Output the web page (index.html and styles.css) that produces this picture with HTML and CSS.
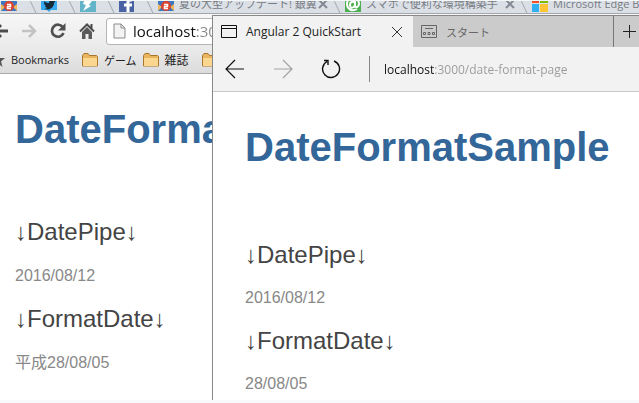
FILE: index.html
```html
<!DOCTYPE html>
<html lang="ja">
<head>
    <meta charset="UTF-8">
    <title>Angular 2 QuickStart</title>
    <link rel="stylesheet" href="styles.css">
</head>
<body>
    <div class="desktop">
        <section class="chrome">
            <div class="chrome-tabs">
                <div class="chrome-tab first">
                    <svg width="16" height="16" viewBox="0 0 16 16"><path d="M0 3h16v12H0z" fill="#3c78c0"/><path d="M0 8l4 3-4 4zM16 8l-4 3 4 4z" fill="#f0b45a"/><circle cx="8" cy="10" r="5" fill="#d9432f"/><path d="M6 8.500h3.500v2h-3v2H10" fill="none" stroke="#fff" stroke-width="1.500"/></svg>
                </div>
                <div class="chrome-tab">
                    <svg width="16" height="16" viewBox="0 0 16 16"><path d="M0 0h16v14H10l-2 2-2-2H0z" fill="#35aaf0"/><path d="M3 5c2 2 4 2 5 2 0-3 3-4 5-2l2-1-2 3c0 4-4 8-10 6 2 0 3-1 3-1-2-1-2-2-2-2h1C3 9 3 7 3 5z" fill="#172a38"/></svg>
                </div>
                <div class="chrome-tab">
                    <svg width="16" height="16" viewBox="0 0 16 16"><rect width="16" height="16" fill="#62b5c8"/><path d="M5 2h9l-5 7 2 1-8 5 3-6-3-1z" fill="#fff"/></svg>
                </div>
                <div class="chrome-tab">
                    <svg width="16" height="16" viewBox="0 0 16 16"><rect width="15" height="16" fill="#4862a3"/><path d="M13 4h-2c-1 0-2 1-2 2v10M5 9h8" fill="none" stroke="#fff" stroke-width="3"/></svg>
                </div>
                <div class="chrome-tab wide">
                    <svg width="16" height="16" viewBox="0 0 16 16"><path d="M0 3h16v12H0z" fill="#3c78c0"/><path d="M0 8l4 3-4 4zM16 8l-4 3 4 4z" fill="#f0b45a"/><circle cx="8" cy="10" r="5" fill="#d9432f"/><path d="M6 8.500h3.500v2h-3v2H10" fill="none" stroke="#fff" stroke-width="1.500"/></svg>
                    <span class="tab-title">夏の大型アップデート! 銀翼と</span>
                    <button class="tab-close" aria-label="閉じる"><svg width="10" height="10" viewBox="0 0 10 10"><path d="M1 1l8 8M9 1L1 9" stroke="#858a92" stroke-width="2"/></svg></button>
                </div>
                <div class="chrome-tab wide">
                    <svg width="16" height="16" viewBox="0 0 16 16"><rect width="16" height="16" fill="#4caf50"/><path d="M12 13c-5 3-10 0-10-5s4-6 7-6 5 3 5 6-3 4-4 2V5M10 8c0-3-5-3-5 1s4 3 5 0" fill="none" stroke="#fff" stroke-width="2"/></svg>
                    <span class="tab-title">スマホで便利な環境構築手</span>
                    <button class="tab-close" aria-label="閉じる"><svg width="10" height="10" viewBox="0 0 10 10"><path d="M1 1l8 8M9 1L1 9" stroke="#858a92" stroke-width="2"/></svg></button>
                </div>
                <div class="chrome-tab wide">
                    <svg width="16" height="16" viewBox="0 0 16 16"><path d="M0 0h7v7H0z" fill="#f05022"/><path d="M8 0h8v7H8z" fill="#7fba00"/><path d="M0 8h7v8H0z" fill="#30b0f0"/><path d="M8 8h8v8H8z" fill="#ffc433"/></svg>
                    <span class="tab-title">Microsoft Edge B</span>
                </div>
            </div>

            <div class="chrome-bar">
                <button aria-label="戻る"><svg width="16" height="16" viewBox="0 0 16 16"><path d="M16 8H3M9 2L3 8l6 6" fill="none" stroke="#4c4c4c" stroke-width="3"/></svg></button>
                <button aria-label="進む"><svg width="16" height="16" viewBox="0 0 16 16"><path d="M1 8h12M8 2l6 6-6 6" fill="none" stroke="#c3c3c3" stroke-width="2.500"/></svg></button>
                <button aria-label="再読み込み"><svg width="16" height="16" viewBox="0 0 16 16"><path d="M13 4.500A6 6 0 1 0 13.500 10" fill="none" stroke="#505050" stroke-width="2.700"/><path d="M15.500 0v7.500H8z" fill="#505050"/></svg></button>
                <button aria-label="ホーム"><svg width="16" height="16" viewBox="0 0 16 16"><path d="M1 8.500L8 1.500l7 7M12.500 1v5" fill="none" stroke="#4c4c4c" stroke-width="2"/><path d="M3 9l5-5 5 5v7H9.500v-5h-3v5H3z" fill="#5a5a5a"/></svg></button>
                <label class="omnibox">
                    <svg width="13" height="16" viewBox="0 0 13 16"><path d="M1 1h7l4 4v10H1z" fill="#f3f3f3" stroke="#8b8b8b"/><path d="M8 1v4h4" fill="none" stroke="#8b8b8b"/></svg>
                    <input type="text" aria-label="アドレス" value="localhost:3000">
                </label>
            </div>

            <nav class="bookmarks">
                <svg class="star" width="14" height="14" viewBox="0 0 14 14"><path d="M7 0l2 5h5l-4 3.500L11.500 14 7 10.500 2.500 14 4 8.500 0 5h5z" fill="#555"/></svg>
                <a href="#">Bookmarks</a>
                <svg width="16" height="14" viewBox="0 0 16 14"><path d="M.5 13V2.500L2 .5h4l1.500 2h7l1 1V13z" fill="#e9b45c" stroke="#a8762d"/><path d="M1 5h14v8H1z" fill="#fbd68f"/></svg>
                <a class="kana" href="#">ゲーム</a>
                <svg width="16" height="14" viewBox="0 0 16 14"><path d="M.5 13V2.500L2 .5h4l1.500 2h7l1 1V13z" fill="#e9b45c" stroke="#a8762d"/><path d="M1 5h14v8H1z" fill="#fbd68f"/></svg>
                <a class="kanji" href="#">雑誌</a>
                <svg width="16" height="14" viewBox="0 0 16 14"><path d="M.5 13V2.500L2 .5h4l1.500 2h7l1 1V13z" fill="#e9b45c" stroke="#a8762d"/><path d="M1 5h14v8H1z" fill="#fbd68f"/></svg>
            </nav>

            <main class="page">
                <h1>DateFormatSample</h1>
                <h2>↓DatePipe↓</h2>
                <p>2016/08/12</p>
                <h2>↓FormatDate↓</h2>
                <p>平成28/08/05</p>
            </main>
        </section>

        <section class="edge">
            <div class="edge-tabs">
                <div class="edge-tab active">
                    <svg width="16" height="13" viewBox="0 0 16 13"><path d="M.5.5h15v12H.5zM0 3.500h16" fill="none" stroke="#111"/></svg>
                    <span>Angular 2 QuickStart</span>
                    <button aria-label="閉じる"><svg width="10" height="10" viewBox="0 0 10 10"><path d="M0 0l10 10M10 0L0 10" stroke="#333"/></svg></button>
                </div>
                <div class="edge-tab">
                    <svg width="16" height="13" viewBox="0 0 16 13"><path d="M.5.5h15v12H.5zM4 3.500h8M2.500 7.500h2v2h-2zM7 7.500h2v2H7zM11.500 7.500h2v2h-2z" fill="none" stroke="#666"/></svg>
                    <span class="kana">スタート</span>
                </div>
                <button class="new-tab" aria-label="新しいタブ"><svg width="13" height="13" viewBox="0 0 13 13"><path d="M0 6.500h13M6.500 0v13" stroke="#222"/></svg></button>
            </div>

            <div class="edge-bar">
                <button aria-label="戻る"><svg width="20" height="20" viewBox="0 0 20 20"><path d="M19 10H1M10 1l-9 9 9 9" fill="none" stroke="#111" stroke-width="1.200"/></svg></button>
                <button aria-label="進む"><svg width="20" height="20" viewBox="0 0 20 20"><path d="M1 10h18M10 1l9 9-9 9" fill="none" stroke="#a2a2a2" stroke-width="1.200"/></svg></button>
                <button aria-label="更新"><svg width="20" height="20" viewBox="0 0 20 20"><path d="M13 2A8.500 8.500 0 1 1 6 2.500M3 1.500h4V6" fill="none" stroke="#111" stroke-width="1.400"/></svg></button>
                <input type="text" aria-label="アドレス" value="localhost:3000/date-format-page">
            </div>

            <main class="page">
                <h1>DateFormatSample</h1>
                <h2>↓DatePipe↓</h2>
                <p>2016/08/12</p>
                <h2>↓FormatDate↓</h2>
                <p>28/08/05</p>
            </main>
        </section>
    </div>
</body>
</html>
```
FILE: styles.css
```css
* {
    box-sizing: border-box;
}
body {
    margin: 0;
    background-color: #f8f9fb;
    font-family: "Open Sans", "Noto Sans CJK JP", sans-serif;
    font-size: 12px;
}
button {
    display: flex;
    padding: 0;
    border: none;
    background: none;
    cursor: pointer;
}
svg {
    display: block;
    flex: none;
}
input {
    min-width: 0;
    padding: 0;
    border: none;
    outline: none;
    font-family: inherit;
    color: transparent;
    -webkit-background-clip: text;
    background-clip: text;
}
.desktop {
    position: relative;
    height: 100vh;
    padding-bottom: 3px;
    overflow: hidden;
}

/* Chrome */
.chrome {
    display: flex;
    flex-direction: column;
    height: 100%;
    background: white;
}
.chrome-tabs {
    display: flex;
    flex: none;
    align-items: flex-end;
    height: 14px;
    overflow: hidden;
    background: #dbe0e7;
    border-top: 1px solid #f4f6f8;
    border-bottom: 1px solid #a3a7ab;
}
.chrome-tab {
    position: relative;
    display: flex;
    flex: none;
    align-items: center;
    width: 39px;
    height: 19px;
    padding: 0 8px 0 9px;
}
.chrome-tab::after {
    content: "";
    position: absolute;
    top: 0;
    right: 0;
    height: 100%;
    border-right: 1px solid #a3a8ae;
    transform: skewX(25deg);
}
.chrome-tab.first {
    width: 32px;
    padding-left: 1px;
}
.chrome-tab.wide {
    width: 187px;
}
.tab-title {
    flex: 1;
    margin-left: 5px;
    overflow: hidden;
    white-space: nowrap;
    color: #777b82;
    font-size: 11px;
    line-height: 16px;
}
.chrome-bar {
    display: flex;
    flex: none;
    align-items: center;
    gap: 13px;
    height: 32px;
    margin-left: -8px;
    padding-top: 2px;
    background: linear-gradient(#f7f7f7, #ebebeb);
}
.omnibox {
    display: flex;
    flex: 1;
    align-items: center;
    gap: 7px;
    height: 27px;
    margin-left: -2px;
    padding-left: 6px;
    background: white;
    border: 1px solid #b5b5b5;
    border-radius: 3px;
}
.omnibox input {
    flex: 1;
    font-size: 15px;
    background-image: linear-gradient(to right, #111 64px, #888 64px);
}
.bookmarks {
    display: flex;
    flex: none;
    align-items: center;
    height: 28px;
    background: linear-gradient(#ebebeb, #dcdcdc);
    border-bottom: 1px solid #aaa;
}
.bookmarks a {
    margin: 0 13px 0 6px;
    color: #222;
    font-size: 11px;
    text-decoration: none;
}
.bookmarks .star {
    margin-left: -9px;
}
.bookmarks .kana {
    margin-right: 6px;
}
.bookmarks .kanji {
    font-size: 12px;
}

/* Angular page */
.page {
    flex: 1;
    min-height: 0;
    padding: 32px 15px 0;
    overflow: hidden;
    background: white;
    font-family: "Liberation Sans", "Noto Sans CJK JP", sans-serif;
}
.page h1 {
    margin: 0 0 66px;
    color: #336699;
    font-size: 40px;
    line-height: 46px;
}
.page h2 {
    margin: 0 0 21px;
    color: #444;
    font-size: 24px;
    font-weight: normal;
    line-height: 28px;
}
.page p {
    margin: 0 0 20px;
    color: #888;
    font-size: 16px;
    line-height: 18px;
}

/* Edge */
.edge {
    position: absolute;
    top: 15px;
    right: 0;
    bottom: 3px;
    left: 212px;
    display: flex;
    flex-direction: column;
    background: #f2f2f2;
    border-top: 1px solid #888;
    border-left: 1px solid #888;
}
.edge-tabs {
    display: flex;
    flex: none;
    height: 31px;
    background: #cbcbcb;
}
.edge-tab {
    display: flex;
    flex: 1;
    align-items: center;
    gap: 9px;
    padding: 0 11px 0 8px;
    color: #666;
    white-space: nowrap;
}
.edge-tab.active {
    background: #f2f2f2;
    color: #222;
}
.edge-tab button {
    margin-left: auto;
}
.edge-tab .kana {
    font-size: 11px;
}
.new-tab {
    align-items: center;
    width: 26px;
    padding-left: 9px;
    border-left: 1px solid #777;
}
.edge-bar {
    display: flex;
    flex: none;
    align-items: center;
    gap: 28px;
    height: 45px;
    padding-left: 12px;
    border-bottom: 1px solid #c8c8c8;
}
.edge-bar input {
    flex: 1;
    height: 26px;
    padding-left: 14px;
    border-left: 1px solid #888;
    font-size: 12px;
    background-image: linear-gradient(to right, #111 65px, #999 65px);
}
.edge .page {
    padding-left: 32px;
}
.edge h1 {
    margin-bottom: 71px;
}
.edge h2 {
    margin-bottom: 20px;
}
```
